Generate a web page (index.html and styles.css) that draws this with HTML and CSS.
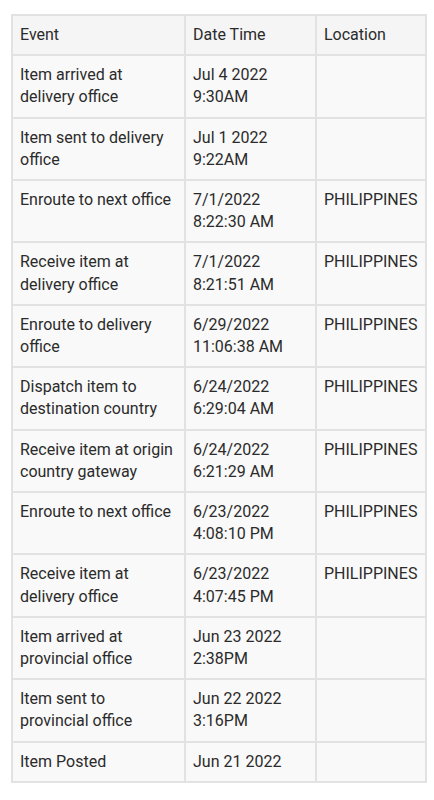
FILE: index.html
```html
<!DOCTYPE html>
<html>
	<head>
		<meta charset="UTF-8">
		<title>Tracking</title>
		<link rel="stylesheet" href="styles.css">
	</head>
	<body>
		<table class="track">
			<colgroup>
				<col class="c-event">
				<col class="c-date">
				<col class="c-loc">
			</colgroup>
			<thead>
				<tr><th>Event</th><th>Date Time</th><th>Location</th></tr>
			</thead>
			<tbody>
				<tr><td>Item arrived at delivery office</td><td>Jul 4 2022<br>9:30AM</td><td></td></tr>
				<tr><td>Item sent to delivery office</td><td>Jul 1 2022<br>9:22AM</td><td></td></tr>
				<tr><td>Enroute to next office</td><td>7/1/2022<br>8:22:30 AM</td><td>PHILIPPINES</td></tr>
				<tr><td>Receive item at delivery office</td><td>7/1/2022<br>8:21:51 AM</td><td>PHILIPPINES</td></tr>
				<tr><td>Enroute to delivery office</td><td>6/29/2022<br>11:06:38 AM</td><td>PHILIPPINES</td></tr>
				<tr><td>Dispatch item to destination country</td><td>6/24/2022<br>6:29:04 AM</td><td>PHILIPPINES</td></tr>
				<tr><td>Receive item at origin country gateway</td><td>6/24/2022<br>6:21:29 AM</td><td>PHILIPPINES</td></tr>
				<tr><td>Enroute to next office</td><td>6/23/2022<br>4:08:10 PM</td><td>PHILIPPINES</td></tr>
				<tr><td>Receive item at delivery office</td><td>6/23/2022<br>4:07:45 PM</td><td>PHILIPPINES</td></tr>
				<tr><td>Item arrived at provincial office</td><td>Jun 23 2022<br>2:38PM</td><td></td></tr>
				<tr><td>Item sent to provincial office</td><td>Jun 22 2022<br>3:16PM</td><td></td></tr>
				<tr><td>Item Posted</td><td>Jun 21 2022</td><td></td></tr>
			</tbody>
		</table>
	</body>
</html>
```

FILE: styles.css
```css
body { margin: 0; background: #fff; font-family: Roboto, "Noto Sans", sans-serif; color: #2b2b2b; }
.track { margin: 14px 0 0 11px; width: 414px; border-collapse: collapse; table-layout: fixed; font-size: 16px; line-height: 22.2px; background: #f9f9f9; }
.c-event { width: 173px; }
.c-date { width: 131px; }
.c-loc { width: 110px; }
.track th, .track td { border: 2px solid #e2e2e2; padding: 8px 7px; text-align: left; vertical-align: top; font-weight: 400; }
.track th { background: #f5f5f5; }
.track td:last-child { white-space: nowrap; }
```
